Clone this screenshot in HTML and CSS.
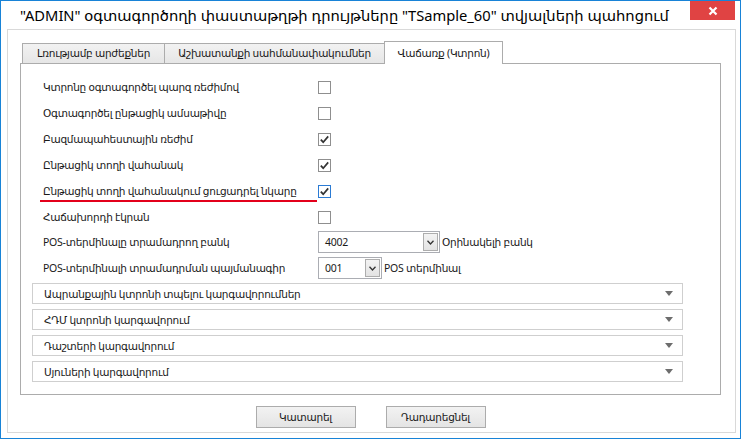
FILE: index.html
```html
<!DOCTYPE html>
<html lang="hy">
<head>
  <meta charset="UTF-8" />
  <title>POS</title>
  <link rel="stylesheet" href="styles.css">
</head>
<body>
  <div class="window">
    <div class="titlebar">
      <div class="title">"ADMIN" օգտագործողի փաստաթղթի դրույթները "TSample_60" տվյալների պահոցում</div>
      <div class="close">
        <svg width="10" height="10" viewBox="0 0 10 10"><path d="M1.5 1.5 L8.5 8.5 M8.5 1.5 L1.5 8.5" stroke="#fff" stroke-width="2.2"/></svg>
      </div>
    </div>

    <div class="frame">
      <div class="tabs">
        <div class="tab t1">Լռությամբ արժեքներ</div>
        <div class="tab t2">Աշխատանքի սահմանափակումներ</div>
        <div class="tab t3 active">Վաճառք (Կտրոն)</div>
      </div>

      <div class="panel">
        <div class="row">
          <span class="lbl">Կտրոնը օգտագործել պարզ ռեժիմով</span>
          <span class="chk"></span>
        </div>
        <div class="row">
          <span class="lbl">Օգտագործել ընթացիկ ամսաթիվը</span>
          <span class="chk"></span>
        </div>
        <div class="row">
          <span class="lbl">Բազմապահեստային ռեժիմ</span>
          <span class="chk"><svg width="11" height="11" viewBox="0 0 11 11"><path d="M1.8 5.6 L4.2 8.2 L9.2 2.4" fill="none" stroke="#333" stroke-width="1.7"/></svg></span>
        </div>
        <div class="row">
          <span class="lbl">Ընթացիկ տողի վահանակ</span>
          <span class="chk"><svg width="11" height="11" viewBox="0 0 11 11"><path d="M1.8 5.6 L4.2 8.2 L9.2 2.4" fill="none" stroke="#333" stroke-width="1.7"/></svg></span>
        </div>
        <div class="row marked">
          <span class="lbl">Ընթացիկ տողի վահանակում ցուցադրել նկարը</span>
          <span class="chk focus"><svg width="11" height="11" viewBox="0 0 11 11"><path d="M1.8 5.6 L4.2 8.2 L9.2 2.4" fill="none" stroke="#333" stroke-width="1.7"/></svg></span>
        </div>
        <div class="row">
          <span class="lbl">Հաճախորդի էկրան</span>
          <span class="chk"></span>
        </div>

        <div class="combo-row first">
          <span class="lbl">POS-տերմինալը տրամադրող բանկ</span>
          <div class="combo wide">
            <span class="val">4002</span>
            <span class="drop"><svg width="7" height="5" viewBox="0 0 7 5"><path d="M0.5 0.8 L3.5 4 L6.5 0.8" fill="none" stroke="#333" stroke-width="1.3"/></svg></span>
          </div>
          <span class="note">Օրինակելի բանկ</span>
        </div>
        <div class="combo-row">
          <span class="lbl">POS-տերմինալի տրամադրման պայմանագիր</span>
          <div class="combo narrow">
            <span class="val">001</span>
            <span class="drop"><svg width="7" height="5" viewBox="0 0 7 5"><path d="M0.5 0.8 L3.5 4 L6.5 0.8" fill="none" stroke="#333" stroke-width="1.3"/></svg></span>
          </div>
          <span class="note">POS տերմինալ</span>
        </div>

        <div class="bars">
          <div class="bar"><span>Ապրանքային կտրոնի տպելու կարգավորումներ</span><i class="tri"></i></div>
          <div class="bar"><span>ՀԴՄ կտրոնի կարգավորում</span><i class="tri"></i></div>
          <div class="bar"><span>Դաշտերի կարգավորում</span><i class="tri"></i></div>
          <div class="bar"><span>Սյուների կարգավորում</span><i class="tri"></i></div>
        </div>
      </div>

      <div class="buttons">
        <button class="btn">Կատարել</button>
        <button class="btn">Դադարեցնել</button>
      </div>
    </div>
  </div>
</body>
</html>
```

FILE: styles.css
```css
* { box-sizing: border-box; }
body {
  margin: 0;
  background: #fff;
  font-family: "Noto Sans", "DejaVu Sans", sans-serif;
  color: #1a1a1a;
}
.window {
  width: 741px; height: 439px;
  border: 1px solid #1883d7;
  background: #fff;
  display: flex; flex-direction: column;
}
.titlebar { height: 28px; display: flex; flex-shrink: 0; }
.title {
  padding: 4px 0 0 19px;
  font-size: 14.7px; color: #000;
  white-space: nowrap;
}
.close {
  margin-left: auto; margin-right: 5px;
  width: 45px; height: 19px;
  background: #e04343;
  display: flex; align-items: center; justify-content: center;
}

.frame {
  flex: 1;
  margin: 0 4px 5px 6px;
  border: 1px solid #d9d9d9;
  padding: 11px 14px 4px 12px;
  display: flex; flex-direction: column;
  font-size: 10.5px; letter-spacing: -0.25px;
}

/* tabs */
.tabs {
  display: flex; align-items: flex-end;
  height: 22px; padding-left: 2px;
}
.tab {
  height: 20px;
  border: 1px solid #acacac; border-bottom: none;
  background: linear-gradient(#f2f2f2, #e6e6e6);
  line-height: 18px;
  text-align: center; white-space: nowrap;
  margin-left: -1px;
}
.tab.t1 { width: 143px; margin-left: 0; }
.tab.t2 { width: 221px; }
.tab.t3 { width: 119px; }
.tab.active {
  height: 23px; margin-bottom: -1px;
  background: #fff; position: relative; z-index: 1;
  line-height: 23px;
}

.panel {
  height: 332px;
  border: 1px solid #acacac;
  padding: 10px 0 0 22px;
}
.row {
  height: 26px;
  display: flex; align-items: center;
  position: relative;
}
.lbl { width: 275px; white-space: nowrap; }
.chk {
  width: 13px; height: 13px;
  border: 1px solid #8f8f8f; background: #fff;
  display: flex; align-items: center; justify-content: center;
}
.chk.focus { border-color: #2b7bd4; }
.row.marked::after {
  content: "";
  position: absolute; left: -3px; top: 22px;
  width: 277px; height: 2px;
  background: #e3001b;
}

.combo-row {
  height: 22px; margin-top: 4px;
  display: flex; align-items: center;
}
.combo-row.first { margin-top: 1px; }
.combo {
  height: 22px;
  border: 1px solid #abadb3; background: #fff;
  display: flex; align-items: center;
  padding: 0 1px 0 6px;
}
.combo.wide { width: 122px; }
.combo.narrow { width: 64px; }
.combo .val { flex: 1; }
.drop {
  width: 15px; height: 18px;
  border: 1px solid #adadad;
  background: linear-gradient(#f3f3f3, #e3e3e3);
  display: flex; align-items: center; justify-content: center;
}
.note { margin-left: 2px; white-space: nowrap; }

.bars { margin: 4px 0 0 -11px; display: flex; flex-direction: column; gap: 5px; }
.bar {
  width: 651px; height: 21px;
  border: 1px solid #cfcfcf; background: #fff;
  display: flex; align-items: center; justify-content: space-between;
  padding: 0 9px 0 11px;
}
.tri {
  width: 0; height: 0;
  border-left: 4px solid transparent; border-right: 4px solid transparent;
  border-top: 5px solid #6d6d6d;
}

.buttons {
  display: flex; justify-content: center; gap: 30px;
  margin-top: 11px;
}
.btn {
  width: 100px; height: 22px;
  border: 1px solid #acacac;
  background: linear-gradient(#f2f2f2, #e4e4e4);
  font-family: inherit; font-size: inherit; letter-spacing: inherit;
  color: #1a1a1a;
  padding: 0;
}
```
